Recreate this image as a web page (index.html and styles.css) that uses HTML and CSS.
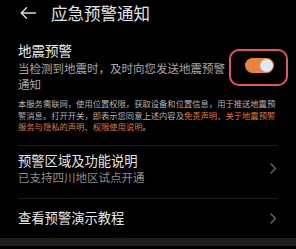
FILE: index.html
```html
<!DOCTYPE html>
<html lang="zh">
<head>
<meta charset="utf-8">
<link rel="stylesheet" href="styles.css">
</head>
<body>
<div class="page">
  <header class="bar">
    <svg class="back" width="16" height="12" viewBox="0 0 16 12"><path d="M15.5 6H1.2M6.5 0.7L1.2 6l5.3 5.3" fill="none" stroke="#dcdcdc" stroke-width="1.4" stroke-linecap="round" stroke-linejoin="round"/></svg>
    <h1 class="title">应急预警通知</h1>
  </header>

  <section class="main">
    <div class="row">
      <div class="row-text">
        <div class="row-title">地震预警</div>
        <div class="row-sub">当检测到地震时，及时向您发送地震预警通知</div>
      </div>
      <div class="mark">
        <div class="track"><div class="knob"></div></div>
      </div>
    </div>
    <p class="notice">本服务需联网，使用位置权限，获取设备和位置信息，用于推送地震预警消息。打开开关，即表示您同意上述内容及<span class="link">免责声明</span>、<span class="link">关于地震预警服务与隐私的声明</span>、<span class="link">权限使用说明</span>。</p>
  </section>

  <div class="item first">
    <div class="item-text">
      <div class="item-title">预警区域及功能说明</div>
      <div class="item-sub">已支持四川地区试点开通</div>
    </div>
    <svg class="chev" width="7" height="11" viewBox="0 0 7 11"><path d="M1 1l4.5 4.5L1 10" fill="none" stroke="#6a6a6a" stroke-width="1.4" stroke-linecap="round" stroke-linejoin="round"/></svg>
  </div>
  <div class="item second">
    <div class="item-text">
      <div class="item-title">查看预警演示教程</div>
    </div>
    <svg class="chev" width="7" height="11" viewBox="0 0 7 11"><path d="M1 1l4.5 4.5L1 10" fill="none" stroke="#6a6a6a" stroke-width="1.4" stroke-linecap="round" stroke-linejoin="round"/></svg>
  </div>
  <div class="band"></div>
</div>
</body>
</html>
```

FILE: styles.css
```css
html, body {
  margin: 0;
  padding: 0;
  background: #000;
}
body {
  width: 296px;
  height: 249px;
  overflow: hidden;
  font-family: "Noto Sans CJK SC", "Noto Sans", sans-serif;
  color: #e8e8e8;
}
.page {
  display: flex;
  flex-direction: column;
}
.bar {
  height: 25px;
  display: flex;
  align-items: center;
  padding-left: 20px;
  box-sizing: border-box;
}
.back {
  display: block;
  margin-right: 15px;
}
.title {
  margin: 0;
  font-size: 16.5px;
  font-weight: 400;
  line-height: 24px;
  color: #e4e4e4;
}
.main {
  padding: 17px 0 0 18px;
}
.row {
  display: flex;
  align-items: flex-start;
  justify-content: space-between;
  padding-right: 8px;
}
.row-text {
  width: 210px;
}
.row-title {
  font-size: 13.5px;
  line-height: 16px;
  color: #ececec;
}
.row-sub {
  font-size: 11.5px;
  line-height: 16px;
  margin-top: 2px;
  color: #a8a8a8;
}
.mark {
  margin-top: 7px;
  border: 2px solid #e0575b;
  border-radius: 10px;
  padding: 7px 12px 11px 14px;
}
.track {
  width: 29px;
  height: 15px;
  border-radius: 8px;
  background: #e8843f;
  display: flex;
  justify-content: flex-end;
  align-items: center;
  box-sizing: border-box;
  padding-right: 1px;
}
.knob {
  width: 13px;
  height: 13px;
  border-radius: 50%;
  background: #dde8ef;
}
.notice {
  margin: 6px 18px 0 0;
  font-size: 8.3px;
  line-height: 11.7px;
  color: #b4b4b4;
}
.link {
  color: #df7a3a;
}
.item {
  margin: 0 18px;
  display: flex;
  align-items: center;
  justify-content: space-between;
  border-top: 1px solid #1d1d1d;
}
.item.first {
  margin-top: 12px;
  padding: 7px 1px 14px 0;
}
.item.second {
  padding: 11px 1px 12px 0;
}
.item-title {
  font-size: 13.3px;
  line-height: 16px;
  color: #e6e6e6;
}
.item-sub {
  font-size: 11.5px;
  line-height: 14px;
  margin-top: 1px;
  color: #8e8e8e;
}
.chev {
  display: block;
}
.band {
  height: 8px;
  background: #1e1e1e;
}
```
